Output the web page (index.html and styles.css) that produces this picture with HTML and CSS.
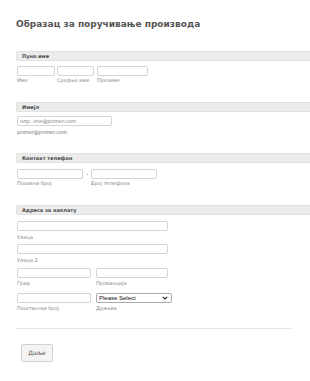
FILE: index.html
```html
<!DOCTYPE html>
<html lang="sr">
<head>
<meta charset="utf-8">
<title>Образац за поручивање производа</title>
<link rel="stylesheet" href="styles.css">
</head>
<body>
<div class="page">
  <h1 class="title">Образац за поручивање производа</h1>

  <section class="sec sec-name">
    <div class="sec-head">Пуно име</div>
    <div class="row">
      <div class="field w-first"><input class="inp" type="text"><span class="sub">Име</span></div>
      <div class="field w-mid"><input class="inp" type="text"><span class="sub">Средње име</span></div>
      <div class="field w-last"><input class="inp" type="text"><span class="sub">Презиме</span></div>
    </div>
  </section>

  <section class="sec sec-email">
    <div class="sec-head">Имејл</div>
    <div class="field w-email"><input class="inp" type="text" placeholder="нпр: ime@primer.com"><span class="sub sub-email">primer@primer.com</span></div>
  </section>

  <section class="sec sec-phone">
    <div class="sec-head">Контакт телефон</div>
    <div class="row">
      <div class="field w-phone"><input class="inp" type="text"><span class="sub sub-phone">Позивни број</span></div>
      <span class="dash">-</span>
      <div class="field w-phone"><input class="inp" type="text"><span class="sub sub-phone">Број телефона</span></div>
    </div>
  </section>

  <section class="sec sec-addr">
    <div class="sec-head">Адреса за наплату</div>
    <div class="field w-street f-street1"><input class="inp" type="text"><span class="sub">Улица</span></div>
    <div class="field w-street f-street2"><input class="inp" type="text"><span class="sub">Улица 2</span></div>
    <div class="row r-city">
      <div class="field w-city"><input class="inp" type="text"><span class="sub sub-city">Град</span></div>
      <div class="field w-prov"><input class="inp" type="text"><span class="sub sub-city">Провинција</span></div>
    </div>
    <div class="row r-zip">
      <div class="field w-city"><input class="inp" type="text"><span class="sub sub-city">Поштански број</span></div>
      <div class="field w-sel">
        <div class="sel-wrap">
          <select class="sel"><option>Please Select</option></select>
          <svg class="chev" width="6" height="4" viewBox="0 0 6 4"><path d="M0.8 0.8 L3 3 L5.2 0.8" fill="none" stroke="#222" stroke-width="1.1"/></svg>
        </div>
        <span class="sub sub-city">Држава</span>
      </div>
    </div>
  </section>

  <hr class="divider">

  <div class="actions">
    <button class="btn" type="button">Даље</button>
  </div>
</div>
</body>
</html>
```

FILE: styles.css
```css
html, body {
  margin: 0;
  padding: 0;
  background: #fff;
}

body {
  font-family: "DejaVu Sans", Verdana, sans-serif;
  color: #555;
  overflow: hidden;
}

.page {
  padding: 18px 0 0 16px;
}

.title {
  margin: 0;
  font-size: 9px;
  line-height: 12px;
  font-weight: bold;
  color: #555;
}

.sec {
  display: flex;
  flex-direction: column;
}

.sec-name { margin-top: 21px; }
.sec-email { margin-top: 19px; }
.sec-phone { margin-top: 18px; }
.sec-addr { margin-top: 19px; }

.sec-head {
  box-sizing: border-box;
  height: 10px;
  line-height: 8px;
  font-size: 5px;
  font-weight: bold;
  color: #4a4a4a;
  padding-left: 5px;
  background: #ececec;
  border: 1px solid #e2e2e2;
  border-right: none;
  border-radius: 2px 0 0 2px;
}

.row {
  display: flex;
  align-items: flex-start;
  padding-left: 1px;
}

.sec-name .row { margin-top: 5px; gap: 2px; }
.sec-phone .row { margin-top: 6px; }

.field {
  display: flex;
  flex-direction: column;
}

.sec-email .field { margin-top: 4px; margin-left: 1px; }
.f-street1 { margin-top: 6px; margin-left: 1px; }
.f-street2 { margin-top: 4px; margin-left: 1px; }
.r-city { margin-top: 5px; gap: 5px; }
.r-zip { margin-top: 7px; gap: 5px; }

.inp {
  box-sizing: border-box;
  display: block;
  height: 10px;
  margin: 0;
  padding: 0 2px;
  border: 1px solid #d4d4d4;
  border-radius: 2px;
  background: #fff;
  font-family: "DejaVu Sans", Verdana, sans-serif;
  font-size: 5px;
  color: #555;
  outline: none;
}

.inp::placeholder {
  color: #777;
}

.w-first { width: 38px; }
.w-mid { width: 37px; }
.w-last { width: 51px; margin-left: 1px; }
.w-email { width: 95px; }
.w-phone { width: 66px; }
.w-street { width: 151px; }
.w-city { width: 74px; }
.w-prov { width: 72px; }
.w-sel { width: 76px; }

.field .inp { width: 100%; }

.sub {
  display: block;
  font-size: 5px;
  line-height: 6px;
  color: #888;
  white-space: nowrap;
}

.sec-name .sub { margin-top: 1px; }
.sub-email { margin-top: 3px; color: #666; }
.sub-phone { margin-top: 1px; }
.f-street1 .sub, .f-street2 .sub { margin-top: 3px; }
.sub-city { margin-top: 2px; }

.dash {
  width: 8px;
  text-align: center;
  font-size: 6px;
  line-height: 10px;
  color: #777;
}

.sel-wrap {
  position: relative;
  height: 10px;
  font-size: 0;
  line-height: 0;
}

.sel {
  box-sizing: border-box;
  display: block;
  -webkit-appearance: none;
  appearance: none;
  width: 100%;
  height: 10px;
  margin: 0;
  padding: 0 0 0 2px;
  border: 1px solid #aaa;
  border-radius: 2px;
  background: #fff;
  font-family: "Liberation Sans", Arial, sans-serif;
  font-size: 6px;
  line-height: 8px;
  color: #111;
  outline: none;
}

.chev {
  position: absolute;
  right: 4px;
  top: 3px;
}

.divider {
  margin: 17px 0 0 0;
  width: 276px;
  height: 0;
  border: none;
  border-top: 1px solid #e6e6e6;
}

.actions {
  margin-top: 11px;
  padding-left: 5px;
}

.btn {
  box-sizing: border-box;
  width: 32px;
  height: 18px;
  margin: 0;
  padding: 0;
  border: 1px solid #d2d2d2;
  border-radius: 2px;
  background: #f4f4f4;
  font-family: "DejaVu Sans", Verdana, sans-serif;
  font-size: 6px;
  color: #555;
}
```
